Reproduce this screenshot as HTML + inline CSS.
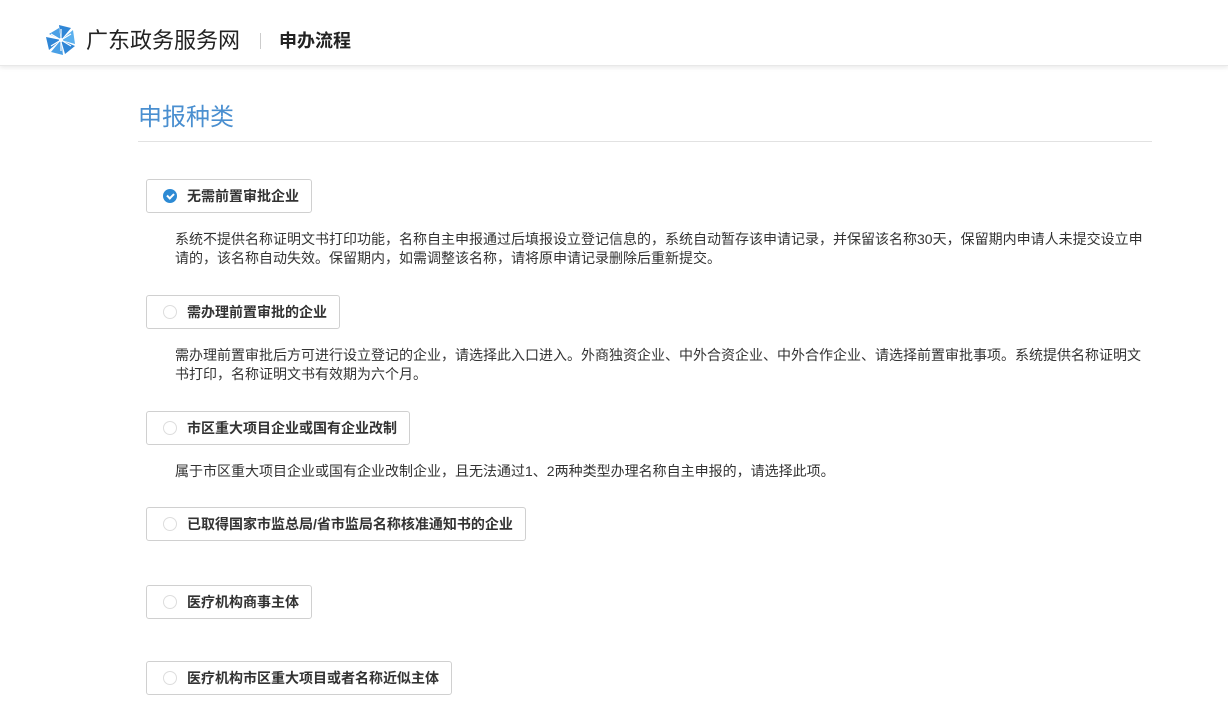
<!DOCTYPE html><html><head><meta charset="utf-8"><style>
*{margin:0;padding:0;box-sizing:border-box}
body{width:1228px;height:706px;overflow:hidden;background:#fff;font-family:"Liberation Sans","Noto Sans CJK SC",sans-serif;color:#333;position:relative}
.hd{position:absolute;left:0;top:0;width:1228px;height:66px;background:#fff;box-shadow:0 2px 4px rgba(0,0,0,.08);border-bottom:1px solid #e8e8e8}
.logo{position:absolute;left:45px;top:24px}
.site{position:absolute;left:86px;top:26px;font-size:22px;color:#222;line-height:30px}
.sep{position:absolute;left:260px;top:33px;width:1px;height:16px;background:#ccc}
.pg{position:absolute;left:279px;top:29px;font-size:18px;font-weight:bold;color:#222;line-height:24px}
.t{position:absolute;left:138px;top:102px;font-size:24px;color:#4a8fd0;line-height:32px}
.ln{position:absolute;left:138px;top:141px;width:1014px;height:1px;background:#e2e2e2}
.b{position:absolute;left:146px;height:34px;border:1px solid #d0d0d0;border-radius:3px;padding:0 12px 0 40px;font-size:14px;font-weight:bold;line-height:32px;color:#333}
.b:before{content:"";position:absolute;left:16px;top:9px;width:14px;height:14px;border:1px solid #ddd;border-radius:50%;box-sizing:border-box}
.b.on:before{background:#2d8ad4;border-color:#2d8ad4}
.b.on:after{content:"";position:absolute;left:20px;top:13px;width:5px;height:3px;border-left:2px solid #fff;border-bottom:2px solid #fff;transform:rotate(-45deg)}
.d{position:absolute;left:175px;width:1000px;font-size:14px;line-height:19px;color:#333}
</style></head><body>
<div class="hd">
<svg class="logo" width="32" height="32" viewBox="0 0 32 32"><polygon points="4,10 14,4 16,16" fill="#4aa0e6"/><polygon points="14,1 26,4 16,16" fill="#2f86d6"/><polygon points="28,6 30,20 16,16" fill="#5bb0ee"/><polygon points="30,22 20,30 16,16" fill="#2f86d6"/><polygon points="18,31 6,28 16,16" fill="#4aa0e6"/><polygon points="4,26 1,13 16,16" fill="#2f86d6"/><g stroke="#fff" stroke-width="1.2"><line x1="16" y1="5" x2="16" y2="27"/><line x1="6" y1="10" x2="26" y2="22"/><line x1="26" y1="10" x2="6" y2="22"/></g><circle cx="16" cy="16" r="2" fill="#fff"/></svg>
<div class="site">广东政务服务网</div><div class="sep"></div><div class="pg">申办流程</div></div>
<div class="t">申报种类</div><div class="ln"></div>
<div class="b on" style="top:179px">无需前置审批企业</div>
<div class="d" style="top:230px">系统不提供名称证明文书打印功能，名称自主申报通过后填报设立登记信息的，系统自动暂存该申请记录，并保留该名称30天，保留期内申请人未提交设立申<br>请的，该名称自动失效。保留期内，如需调整该名称，请将原申请记录删除后重新提交。</div>
<div class="b" style="top:295px">需办理前置审批的企业</div>
<div class="d" style="top:346px">需办理前置审批后方可进行设立登记的企业，请选择此入口进入。外商独资企业、中外合资企业、中外合作企业、请选择前置审批事项。系统提供名称证明文<br>书打印，名称证明文书有效期为六个月。</div>
<div class="b" style="top:411px">市区重大项目企业或国有企业改制</div>
<div class="d" style="top:462px">属于市区重大项目企业或国有企业改制企业，且无法通过1、2两种类型办理名称自主申报的，请选择此项。</div>
<div class="b" style="top:507px">已取得国家市监总局/省市监局名称核准通知书的企业</div>
<div class="b" style="top:585px">医疗机构商事主体</div>
<div class="b" style="top:661px">医疗机构市区重大项目或者名称近似主体</div>
</body></html>
